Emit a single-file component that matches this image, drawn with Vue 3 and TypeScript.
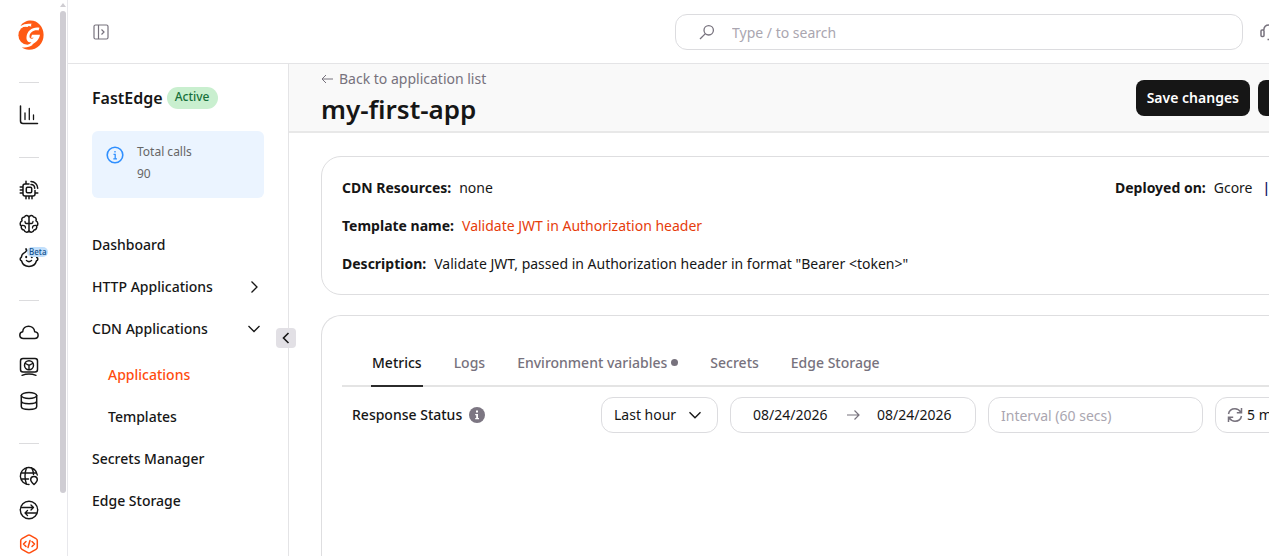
<script setup lang="ts">
import { ref } from 'vue'

interface RailItem { id: string; label: string; active?: boolean; beta?: boolean }
interface NavItem { label: string; arrow?: 'right' | 'down'; children?: string[] }

const railGroups: RailItem[][] = [
  [{ id: 'chart', label: 'Reports' }],
  [
    { id: 'chip', label: 'Edge compute' },
    { id: 'brain', label: 'Machine learning' },
    { id: 'baby', label: 'Assistant', beta: true },
  ],
  [
    { id: 'cloud', label: 'Cloud' },
    { id: 'host', label: 'Hosting' },
    { id: 'db', label: 'Storage' },
  ],
  [
    { id: 'globe', label: 'DNS' },
    { id: 'swap', label: 'CDN' },
    { id: 'code', label: 'FastEdge', active: true },
  ],
]

const nav: NavItem[] = [
  { label: 'Dashboard' },
  { label: 'HTTP Applications', arrow: 'right' },
  { label: 'CDN Applications', arrow: 'down', children: ['Applications', 'Templates'] },
  { label: 'Secrets Manager' },
  { label: 'Edge Storage' },
]

const tabs = ['Metrics', 'Logs', 'Environment variables', 'Secrets', 'Edge Storage']
const activeTab = ref('Metrics')
const search = ref('')
const range = ref('Last hour')
const from = ref('08/24/2026')
const to = ref('08/24/2026')
const interval = ref('')
</script>

<template>
  <div class="shell">
    <nav class="rail" aria-label="Products">
      <div class="rail-items">
        <a class="logo" href="#" aria-label="Gcore">
          <svg viewBox="0 0 26 30" width="26" height="30">
            <path fill="#ff5a14" d="M2.500 6C4.500 2.500 9 .6 12.500 .6C20 .6 25.600 7 25.600 14.800C25.600 23.500 19.500 29.800 11 29.800C8 29.800 5.500 28.800 3.800 27.300C8 28 12 27 14.500 25L13 3.800Q7 3 2.500 6Z" />
            <ellipse fill="#ff5a14" cx="9.500" cy="15.200" rx="9.100" ry="9.500" />
            <path fill="#fff" d="M3 7.500Q8 4 14.500 3.800Q11.500 4.800 9.500 7Q6 6.500 3 7.500Z" />
            <path fill="#fff" d="M21.500 7.800L20.500 10.500C15.500 9.700 12 12.500 11.500 16C11.200 18.500 13.800 19.800 15.800 17.800H13L14 14.800H22C21 21 15 26 6 25.800C9.500 25.500 12 24.300 13.500 22.300C10 22.800 8.200 20.500 8.500 17C9 11 14.500 6.600 21.500 7.800Z" />
          </svg>
        </a>
        <div v-for="(group, i) in railGroups" :key="i" class="rail-group">
          <a v-for="item in group" :key="item.id" href="#" class="rail-link" :class="{ active: item.active }" :aria-label="item.label">
            <svg viewBox="0 0 20 20" width="20" height="20" fill="none" stroke="currentColor" stroke-width="1.500" stroke-linecap="round" stroke-linejoin="round">
              <template v-if="item.id === 'chart'">
                <path d="M1.500 1V16Q1.500 18.500 4 18.500H18.500" /><path d="M6 8V14.500M10.300 3.500V14.500M14.500 10V14.500" stroke-width="1.300" />
              </template>
              <template v-else-if="item.id === 'chip'">
                <path d="M10 4H6Q4 4 4 6V14Q4 16 6 16H14Q16 16 16 14V10.500M7 4V1.200M7 16V18.800M10 16V18.800M13 16V18.800M4 7H1.200M4 10H1.200M4 13H1.200M16 13H18.800" />
                <rect x="7.300" y="7.300" width="5.400" height="5.400" rx="1.200" />
                <path d="M12 4.500A3.800 3.800 0 0 1 15.700 8.200M12 1.500A6.700 6.700 0 0 1 18.700 8.200" />
              </template>
              <template v-else-if="item.id === 'brain'">
                <path d="M10 3.500C9.500 1.300 6.500.8 5.500 3C3.300 3 2.300 5 3 6.800C.7 8 .7 11 2.300 12C1.800 14.500 3.500 16 5 16C6 19 9.500 18.800 10 16.500ZM10 3.500C10.500 1.300 13.500.8 14.500 3C16.700 3 17.700 5 17 6.800C19.300 8 19.300 11 17.700 12C18.200 14.500 16.500 16 15 16C14 19 10.500 18.800 10 16.500" />
                <path d="M10 9.500H7.500Q6 9.500 6 7.500M3 11.500Q6.500 11 6.500 14M10 9.500H12.500Q14 9.500 14 7.500M17 11.500Q13.500 11 13.500 14" stroke-width="1.300" />
              </template>
              <template v-else-if="item.id === 'baby'">
                <path d="M7 .8C8.300 2.500 7 4 4.500 5.300C2.700 6.500 2.500 8.300 2.300 9.500C.8 10 .8 12.500 2.500 12.800C3.500 16.500 6.500 18.500 10 18.500S16.500 16.500 17.500 12.800C19.200 12.500 19.200 10 17.700 9.500M7 1.500L9 3" />
                <path d="M7.200 8.800V9.300M12.800 8.800V9.300" stroke-width="2" /><path d="M7.500 12.500Q10 14.700 12.500 12.500" />
              </template>
              <path v-else-if="item.id === 'cloud'" d="M4.500 15.500C-.3 15.500-.2 9.500 3.700 8.800C4 1.500 15 1.500 15.700 8.800C20.300 9.200 20.200 15.500 15.700 15.500Z" />
              <template v-else-if="item.id === 'host'">
                <rect x="1.500" y="1.500" width="17" height="13.500" rx="2.500" /><circle cx="10" cy="8.200" r="4.500" />
                <path d="M6.500 6.500L10 8.300L13.500 6.500M10 8.300V12.500M3 18.300Q10 15.800 17 18.300" stroke-width="1.400" />
              </template>
              <template v-else-if="item.id === 'db'">
                <ellipse cx="10" cy="4.500" rx="7.700" ry="3" /><path d="M2.300 4.500V15.500C2.300 19.500 17.700 19.500 17.700 15.500V4.500M2.300 10C2.300 13.500 17.700 13.500 17.700 10" />
              </template>
              <template v-else-if="item.id === 'globe'">
                <path d="M18.300 9A8.500 8.500 0 1 0 10 18.500M2 7H17.500M2 13H9.500M7.500 1.700Q4.500 10 7.500 18.300M12.500 1.700Q14.500 5 14.500 8.500" stroke-width="1.400" />
                <path d="M15 18.500Q11.700 15.300 11.700 13.700A3.300 3.300 0 0 1 18.300 13.700Q18.300 15.300 15 18.500Z" />
              </template>
              <template v-else-if="item.id === 'swap'">
                <circle cx="10" cy="10" r="8.700" stroke-width="1.400" /><path d="M2.500 7.500H14.500M12 5L14.500 7.500L12 10M17.500 13H6M8.500 10.500L6 13L8.500 15.500" stroke-width="1.300" />
              </template>
              <template v-else>
                <path d="M8.800 1.300Q10 .6 11.200 1.300L17 4.600Q18.300 5.300 18.300 6.700V13.300Q18.300 14.700 17 15.400L11.200 18.700Q10 19.400 8.800 18.700L3 15.400Q1.700 14.700 1.700 13.300V6.700Q1.700 5.300 3 4.600Z" />
                <path d="M7 7.500L4.500 10L7 12.500M13 7.500L15.500 10L13 12.500M11 6.500L9 13.500" />
              </template>
            </svg>
            <span v-if="item.beta" class="beta">Beta</span>
          </a>
        </div>
      </div>
      <div class="rail-scroll" aria-hidden="true"><i class="arrow"></i><i class="thumb"></i></div>
    </nav>

    <div class="workspace">
      <header class="topbar">
        <button class="icon-button" type="button" aria-label="Toggle menu">
          <svg viewBox="0 0 16 16" width="16" height="16" fill="none" stroke="currentColor" stroke-width="1.200"><rect x="1" y="1" width="14" height="14" rx="1.500" /><path d="M5.500 1V15M8.500 5.500L11 8L8.500 10.500" /></svg>
        </button>
        <label class="search">
          <svg viewBox="0 0 16 16" width="16" height="16" fill="none" stroke="currentColor" stroke-width="1.300"><circle cx="9.700" cy="6.300" r="4.700" /><path d="M6.400 9.600L1 15" /></svg>
          <input v-model="search" type="text" placeholder="Type / to search" aria-label="Search" />
        </label>
        <button class="icon-button" type="button" aria-label="Support">
          <svg viewBox="0 0 20 20" width="20" height="20" fill="none" stroke="currentColor" stroke-width="1.500"><rect x="2" y="8" width="3" height="6.500" rx="1" /><rect x="15" y="8" width="3" height="6.500" rx="1" /><path d="M4.800 8Q5 3 10 3T15.200 8M8.500 17.500H13Q16.500 17.500 16.500 14.500" /></svg>
        </button>
      </header>

      <div class="columns">
        <aside class="sidebar">
          <div class="product"><strong>FastEdge</strong><span class="status">Active</span></div>
          <section class="calls">
            <svg viewBox="0 0 18 18" width="18" height="18" fill="none" stroke="#2f8fff" stroke-width="1.600"><circle cx="9" cy="9" r="7.800" /><path d="M9 5V6.500M7.500 8.300H9.200V13M7.300 12.800H11" stroke-width="1.300" /></svg>
            <div><span>Total calls</span><span>90</span></div>
          </section>
          <ul class="menu">
            <li v-for="item in nav" :key="item.label">
              <a href="#">
                {{ item.label }}
                <svg v-if="item.arrow" viewBox="0 0 14 14" width="14" height="14" fill="none" stroke="currentColor" stroke-width="1.300"><path :d="item.arrow === 'right' ? 'M4.500 1.500L10 7L4.500 12.500' : 'M1.500 4L7 9.500L12.500 4'" /></svg>
              </a>
              <ul v-if="item.children" class="submenu">
                <li v-for="child in item.children" :key="child"><a href="#" :class="{ active: child === 'Applications' }">{{ child }}</a></li>
              </ul>
            </li>
          </ul>
          <button class="collapse" type="button" aria-label="Collapse sidebar">
            <svg viewBox="0 0 12 12" width="12" height="12" fill="none" stroke="currentColor" stroke-width="1.600"><path d="M8.500 1L3.500 6L8.500 11" /></svg>
          </button>
        </aside>

        <main class="main">
          <div class="page">
            <header class="page-head">
              <div>
                <a class="back" href="#"><svg viewBox="0 0 12 12" width="12" height="12" fill="none" stroke="currentColor"><path d="M12 6H1M5 2L1 6L5 10" /></svg>Back to application list</a>
                <h1>my-first-app</h1>
              </div>
              <div class="actions">
                <button class="primary" type="button">Save changes</button>
                <button class="primary more" type="button" aria-label="More actions"></button>
              </div>
            </header>

            <div class="content">
              <section class="card details">
                <div class="row">
                  <p><b>CDN Resources:</b><span>none</span></p>
                  <p class="deployed"><b>Deployed on:</b><span>Gcore</span><span class="bar">|</span></p>
                </div>
                <p><b>Template name:</b><a href="#">Validate JWT in Authorization header</a></p>
                <p><b>Description:</b><span>Validate JWT, passed in Authorization header in format "Bearer &lt;token&gt;"</span></p>
              </section>

              <section class="card metrics">
                <div class="tabs" role="tablist">
                  <button v-for="tab in tabs" :key="tab" type="button" role="tab" :aria-selected="activeTab === tab" :class="{ active: activeTab === tab }" @click="activeTab = tab">
                    {{ tab }}<i v-if="tab === 'Environment variables'" class="dot"></i>
                  </button>
                </div>
                <div class="toolbar">
                  <h2>Response Status
                    <svg viewBox="0 0 16 16" width="16" height="16"><circle cx="8" cy="8" r="8" fill="#7c7682" /><path d="M7 3.500H9V5.500H7ZM6.200 7H9V11H10V12.300H6.200V11H7.200V8.200H6.200Z" fill="#fff" /></svg>
                  </h2>
                  <div class="controls">
                    <div class="field range">
                      <select v-model="range" aria-label="Time range"><option>Last hour</option></select>
                      <svg viewBox="0 0 14 14" width="14" height="14" fill="none" stroke="currentColor" stroke-width="1.400"><path d="M1.500 4.200L7 9.700L12.500 4.200" /></svg>
                    </div>
                    <div class="field dates">
                      <input v-model="from" type="text" aria-label="From date" />
                      <svg viewBox="0 0 14 14" width="14" height="14" fill="none" stroke="#77727d" stroke-width="1.200"><path d="M1 7H13M8.500 2.500L13 7L8.500 11.500" /></svg>
                      <input v-model="to" type="text" aria-label="To date" />
                    </div>
                    <input v-model="interval" class="field interval" type="text" placeholder="Interval (60 secs)" aria-label="Interval" />
                    <button class="field refresh" type="button">
                      <svg viewBox="0 0 16 16" width="16" height="16" fill="none" stroke="#77727d" stroke-width="1.500"><path d="M1.500 7Q2.500 1.800 8 1.800Q11.500 1.800 14 5.300M14.500 1V5.800H9.800M14.500 9Q13.500 14.200 8 14.200Q4.500 14.200 2 10.700M1.500 15V10.200H6.200" /></svg>5 min
                    </button>
                  </div>
                </div>
              </section>
            </div>
          </div>
        </main>
      </div>
    </div>
  </div>
</template>

<style>
body { margin: 0; overflow: hidden; }
</style>

<style scoped>
* { box-sizing: border-box; }
.shell { display: flex; height: 100vh; overflow: hidden; background: #fff; color: #161616; font: 14px/20px "Noto Sans", sans-serif; }
a { color: inherit; text-decoration: none; }
button, input, select { font: inherit; color: inherit; }
button { padding: 0; border: 0; background: none; cursor: pointer; }
input { border: 0; outline: 0; background: none; min-width: 0; }
input::placeholder { color: #aaa6b0; opacity: 1; }
svg { flex: none; display: block; }
ul { list-style: none; margin: 0; padding: 0; }
h1, h2, p { margin: 0; }

.rail { flex: none; display: flex; width: 68px; border-right: 1px solid #e8e8ec; }
.rail-items { width: 60px; padding: 20px 0 0 18px; }
.logo { display: block; width: 26px; height: 37px; }
.rail-group { padding-top: 41px; position: relative; }
.rail-group::before { content: ""; position: absolute; top: 25px; left: 1px; width: 20px; height: 1px; background: #dcdcde; }
.rail-link { position: relative; display: flex; align-items: center; height: 34px; padding-left: 1px; }
.rail-link.active { color: #ff4c0e; }
.beta { position: absolute; left: 9px; top: 6px; padding: 0 2px; border-radius: 5px; background: #c2dffb; color: #11508c; font-size: 8px; line-height: 10px; font-weight: 500; }
.rail-scroll { padding-top: 3px; }
.arrow { display: block; border: 3px solid transparent; border-top: 0; border-bottom: 4px solid #cfcdd2; }
.thumb { display: block; width: 6px; height: 482px; margin-top: 4px; border-radius: 3px; background: #cfcdd3; }

.workspace { flex: 1; min-width: 0; display: flex; flex-direction: column; }
.topbar { flex: none; display: flex; align-items: center; min-width: 1211px; height: 64px; padding: 0 0 0 25px; border-bottom: 1px solid #e4e4e6; gap: 16px; color: #77727d; }
.search { display: flex; align-items: center; gap: 17px; width: 568px; height: 36px; margin-left: auto; padding: 0 23px; border: 1px solid #dcdcdf; border-radius: 12px; }
.search input { flex: 1; padding: 2px 0 0; }
.columns { flex: 1; min-height: 0; display: flex; }

.sidebar { flex: none; position: relative; width: 221px; padding: 22px 24px; border-right: 1px solid #e4e4e6; }
.product { display: flex; align-items: center; gap: 4px; height: 24px; font-size: 16px; }
.product strong { font-weight: 600; }
.status { padding: 0 8px 2px; border-radius: 11px; background: #c9efcf; color: #17703a; font-size: 12px; font-weight: 500; }
.calls { display: flex; gap: 13px; margin-top: 21px; padding: 10px 14px 13px; border-radius: 6px; background: #ebf4ff; color: #666; font-size: 12px; line-height: 22px; }
.calls svg { margin-top: 5px; }
.calls span { display: block; }
.menu { margin-top: 26px; font-weight: 500; }
.menu a { display: flex; align-items: center; justify-content: space-between; height: 42px; padding-right: 3px; }
.submenu { padding: 4px 0 0 16px; }
.submenu a.active { color: #ff4c0e; }
.collapse { position: absolute; top: 264px; right: -8px; display: grid; place-items: center; width: 20px; height: 20px; border-radius: 4px; background: #e2e0e5; z-index: 1; }

.main { flex: 1; min-width: 0; overflow: hidden; }
.page { display: flex; flex-direction: column; min-width: 1072px; height: 100%; }
.page-head { flex: none; display: flex; justify-content: space-between; padding: 0 32px; height: 69px; border-bottom: 2px solid #e8e8e8; background: #f9f9f9; }
.back { display: flex; align-items: center; gap: 6px; height: 30px; color: #77727d; }
h1 { font-size: 26px; line-height: 30px; font-weight: 600; }
.actions { display: flex; gap: 8px; padding-top: 16px; }
.primary { height: 36px; padding: 0 11px; border-radius: 8px; background: #161616; color: #fff; font-weight: 600; }
.more { width: 71px; }
.content { flex: 1; min-height: 0; display: flex; flex-direction: column; gap: 20px; padding: 23px 32px 0; }
.card { border: 1px solid #dedee0; border-radius: 20px; }
.details { display: flex; flex-direction: column; gap: 18px; padding: 21px 20px 20px; }
.row { display: flex; justify-content: space-between; }
.details p { display: flex; gap: 8px; }
.details b { font-weight: 700; }
.details a { color: #e63c0b; }
.details .deployed { width: 193px; }
.bar { margin-left: 2px; color: #171b66; font-weight: 600; }
.metrics { flex: 1; padding: 20px 20px 0; border-bottom: 0; border-radius: 20px 20px 0 0; }
.tabs { display: flex; gap: 30px; height: 51px; padding-left: 29px; border-bottom: 2px solid #e4e4e4; }
.tabs button { display: flex; align-items: center; height: 51px; padding: 4px 1px 0; border-bottom: 2px solid transparent; color: #77727d; font-weight: 500; }
.tabs .active { border-color: #2b2b2b; color: #161616; }
.dot { width: 7px; height: 7px; margin-left: 4px; border-radius: 50%; background: #77727d; }
.toolbar { display: flex; align-items: center; justify-content: space-between; padding: 10px; }
h2 { display: flex; align-items: center; gap: 7px; font-size: 14px; line-height: 20px; font-weight: 500; }
.controls { display: flex; gap: 12px; }
.field { height: 36px; border: 1px solid #dcdcdf; border-radius: 12px; background: #fff; }
.range { position: relative; width: 117px; }
.range select { width: 100%; height: 34px; padding: 0 12px; border: 0; background: none; appearance: none; }
.range svg { position: absolute; right: 15px; top: 10px; pointer-events: none; }
.dates { display: flex; align-items: center; justify-content: center; gap: 17px; width: 246px; }
.dates input { width: 76px; padding: 0; }
.interval { width: 215px; padding: 0 12px; }
.refresh { display: flex; align-items: center; gap: 4px; width: 83px; padding: 0 11px; white-space: nowrap; }
</style>
